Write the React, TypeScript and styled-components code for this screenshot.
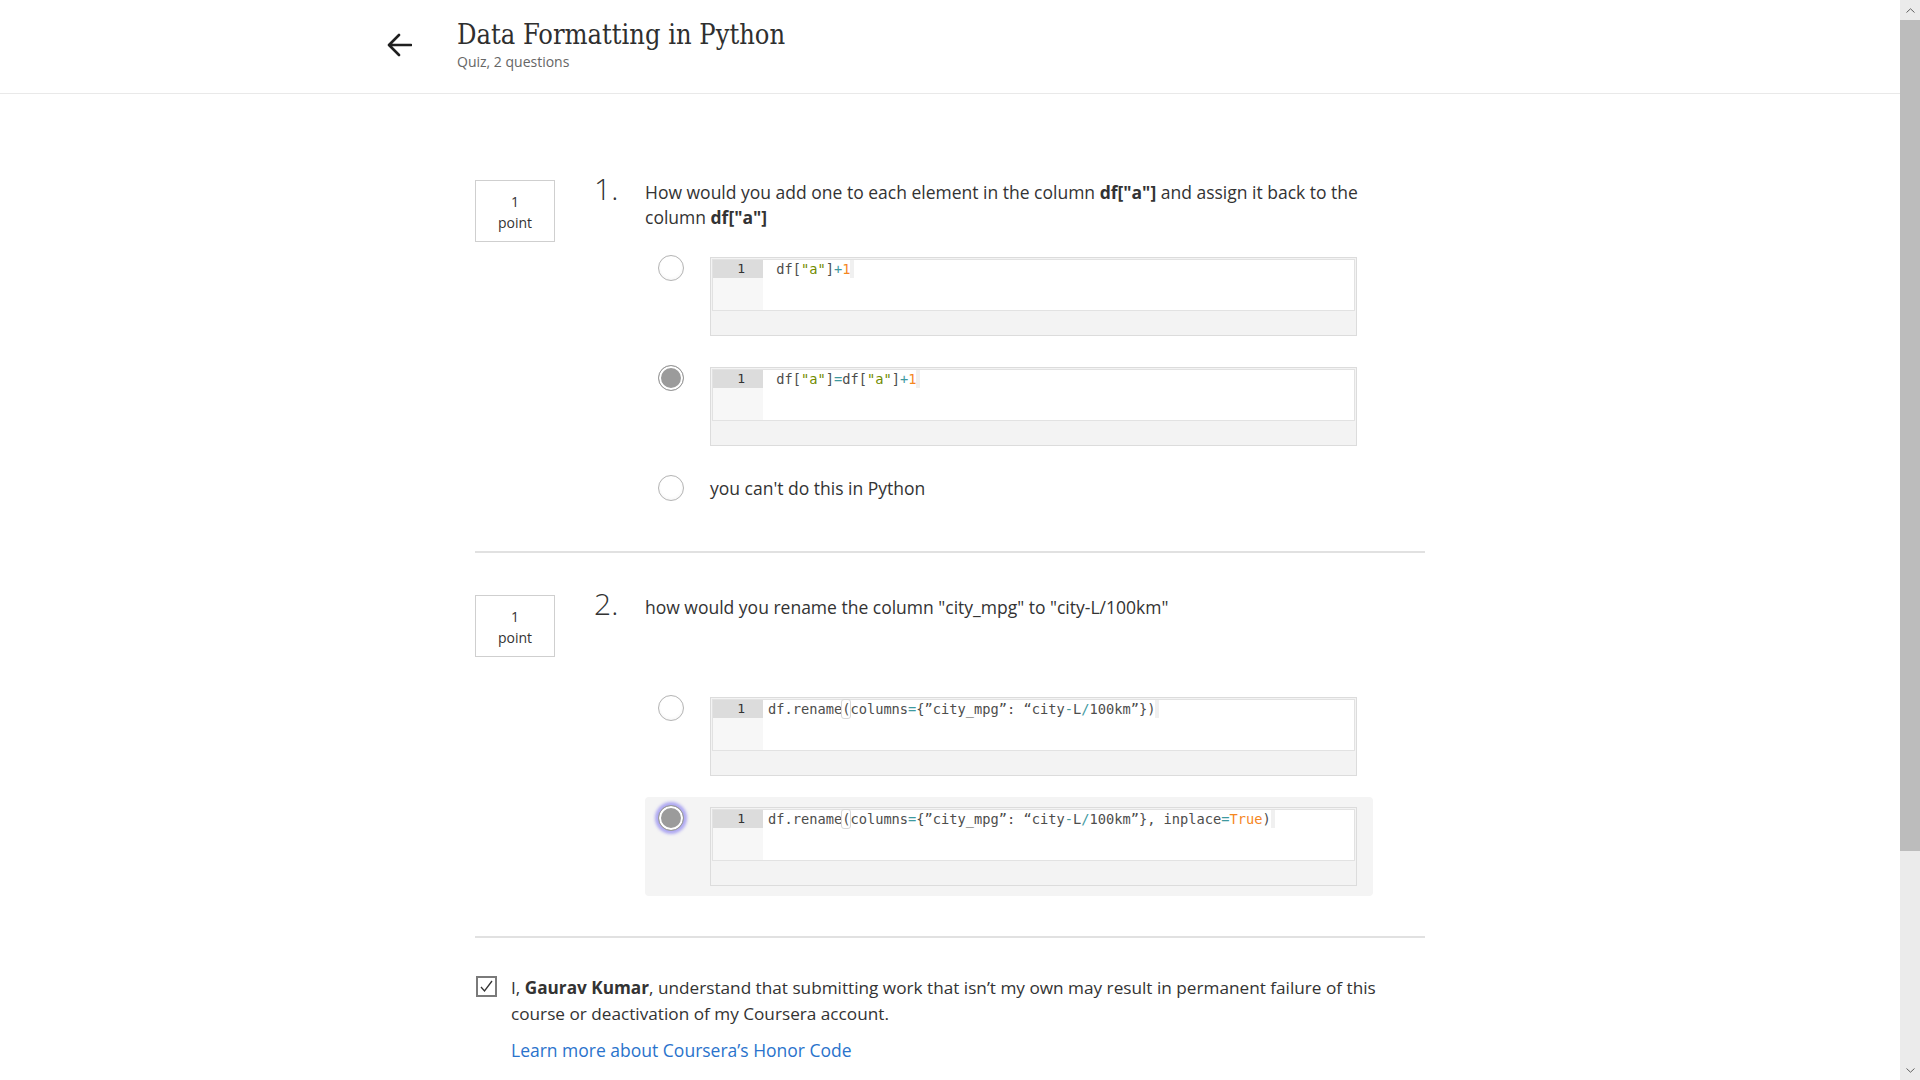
import React from 'react';
import styled, { createGlobalStyle } from 'styled-components';

type TokenKind = 'plain' | 'str' | 'op' | 'num' | 'match';
type Token = [string, TokenKind];

interface Option {
  code?: Token[];
  text?: string;
  checked?: boolean;
  focused?: boolean;
}

interface Question {
  number: number;
  prompt: React.ReactNode;
  spacing: number;
  options: Option[];
}

const questions: Question[] = [
  {
    number: 1,
    spacing: 17,
    prompt: (
      <>
        How would you add one to each element in the column <b>df["a"]</b> and assign it back to the column <b>df["a"]</b>
      </>
    ),
    options: [
      { code: [[' df[', 'plain'], ['"a"', 'str'], [']', 'plain'], ['+', 'op'], ['1', 'num']] },
      {
        checked: true,
        code: [
          [' df[', 'plain'], ['"a"', 'str'], [']', 'plain'], ['=', 'op'], ['df[', 'plain'],
          ['"a"', 'str'], [']', 'plain'], ['+', 'op'], ['1', 'num'],
        ],
      },
      { text: "you can't do this in Python" },
    ],
  },
  {
    number: 2,
    spacing: 67,
    prompt: <>how would you rename the column "city_mpg" to "city-L/100km"</>,
    options: [
      {
        code: [
          ['df.rename', 'plain'], ['(', 'match'], ['columns', 'plain'], ['=', 'op'],
          ['{”city_mpg”: “city', 'plain'], ['-', 'op'], ['L', 'plain'], ['/', 'op'], ['100km”})', 'plain'],
        ],
      },
      {
        checked: true,
        focused: true,
        code: [
          ['df.rename', 'plain'], ['(', 'match'], ['columns', 'plain'], ['=', 'op'],
          ['{”city_mpg”: “city', 'plain'], ['-', 'op'], ['L', 'plain'], ['/', 'op'],
          ['100km”}, inplace', 'plain'], ['=', 'op'], ['True', 'num'], [')', 'plain'],
        ],
      },
    ],
  },
];

const tokenColors: Record<TokenKind, string> = {
  plain: '#4d4d4c',
  str: '#718c00',
  op: '#3e999f',
  num: '#f5871f',
  match: '#4d4d4c',
};

const App = () => {
  return (
    <Page>
      <GlobalStyle />
      <Main>
        <Header>
          <HeaderInner>
            <BackButton aria-label="Back">
              <svg width="25" height="24" viewBox="0 0 25 24" fill="none">
                <path d="M24 12H2.5M12 2L2 12l10 10" stroke="#1f1f1f" strokeWidth="2.6" strokeLinecap="round" strokeLinejoin="round" />
              </svg>
            </BackButton>
            <div>
              <Title>Data Formatting in Python</Title>
              <Subtitle>Quiz, 2 questions</Subtitle>
            </div>
          </HeaderInner>
        </Header>

        <Container>
          {questions.map((q) => (
            <QuestionBlock key={q.number}>
              <PointBox>
                <span>1</span>
                <span>point</span>
              </PointBox>
              <Number>{q.number}.</Number>
              <Content>
                <Prompt $spacing={q.spacing}>{q.prompt}</Prompt>
                <Options>
                  {q.options.map((opt, i) => (
                    <OptionRow key={i} $highlighted={!!opt.focused} $centered={!!opt.text}>
                      <Radio $checked={!!opt.checked} $focused={!!opt.focused} />
                      {opt.text ? (
                        <OptionText>{opt.text}</OptionText>
                      ) : (
                        <CodeBox>
                          <Editor>
                            <Gutter>
                              <LineNumber>1</LineNumber>
                            </Gutter>
                            <CodeLine>
                              {opt.code!.map(([t, k], j) => (
                                <Token key={j} $kind={k}>{t}</Token>
                              ))}
                              <LineEnd />
                            </CodeLine>
                          </Editor>
                          <EditorFooter />
                        </CodeBox>
                      )}
                    </OptionRow>
                  ))}
                </Options>
              </Content>
            </QuestionBlock>
          ))}

          <HonorRow>
            <Checkbox>
              <svg width="15" height="15" viewBox="0 0 15 15" fill="none">
                <path d="M2 8l3.5 4L13 2" stroke="#333" strokeWidth="1.3" />
              </svg>
            </Checkbox>
            <HonorText>
              I, <b>Gaurav Kumar</b>, understand that submitting work that isn’t my own may result in permanent failure of this course or deactivation of my Coursera account.
              <HonorLink href="#">Learn more about Coursera’s Honor Code</HonorLink>
            </HonorText>
          </HonorRow>
        </Container>
      </Main>

      <Scrollbar>
        <ScrollArrow>
          <svg width="9" height="5" viewBox="0 0 9 5"><path d="M0.5 4.5L4.5 0.8 8.5 4.5" stroke="#606060" fill="none" /></svg>
        </ScrollArrow>
        <Thumb />
        <Track />
        <ScrollArrow>
          <svg width="9" height="5" viewBox="0 0 9 5"><path d="M0.5 0.5L4.5 4.2 8.5 0.5" stroke="#606060" fill="none" /></svg>
        </ScrollArrow>
      </Scrollbar>
    </Page>
  );
};

const GlobalStyle = createGlobalStyle`
  html, body {
    margin: 0;
    padding: 0;
    height: 100%;
    overflow: hidden;
  }
  body {
    font-family: "Open Sans", "Liberation Sans", sans-serif;
    color: #333;
    background: #fff;
  }
  * {
    box-sizing: border-box;
  }
`;

const Page = styled.div`
  display: flex;
  height: 100vh;
  overflow: hidden;
`;

const Main = styled.div`
  flex: 1;
  min-width: 0;
  overflow: hidden;
`;

const Header = styled.header`
  height: 94px;
  border-bottom: 1px solid #e9e9e9;
`;

const HeaderInner = styled.div`
  width: 1146px;
  margin: 0 auto;
  padding-left: 10px;
  display: flex;
  align-items: flex-start;
`;

const BackButton = styled.div`
  width: 25px;
  height: 24px;
  margin-top: 33px;
  margin-right: 45px;
  display: flex;
`;

const Title = styled.h1`
  margin: 18px 0 0;
  font-family: "DejaVu Serif Condensed", "DejaVu Serif", serif;
  font-weight: 400;
  font-size: 27px;
  line-height: 34px;
  color: #2f2f2f;
`;

const Subtitle = styled.div`
  margin-top: 0;
  font-size: 14px;
  line-height: 20px;
  color: #666;
`;

const Container = styled.main`
  width: 950px;
  margin: 0 auto;
  padding-top: 44px;
`;

const QuestionBlock = styled.section`
  display: flex;
  align-items: flex-start;
  padding: 42px 0 40px;
  border-bottom: 2px solid #e1e1e1;
`;

const PointBox = styled.div`
  width: 80px;
  height: 62px;
  flex-shrink: 0;
  border: 1px solid #cfcfcf;
  display: flex;
  flex-direction: column;
  align-items: center;
  justify-content: center;
  padding-top: 2px;
  font-size: 14px;
  line-height: 21px;
  color: #333;
`;

const Number = styled.div`
  width: 51px;
  margin-left: 39px;
  margin-top: -6px;
  flex-shrink: 0;
  font-size: 30px;
  font-weight: 300;
  line-height: 30px;
  color: #333;
`;

const Content = styled.div`
  flex: 1;
`;

const Prompt = styled.div<{ $spacing: number }>`
  max-width: 755px;
  margin-bottom: ${(p) => p.$spacing}px;
  font-size: 17.5px;
  line-height: 25px;
  color: #333;
`;

const Options = styled.div`
  display: flex;
  flex-direction: column;
  gap: 11px;
`;

const OptionRow = styled.div<{ $highlighted: boolean; $centered: boolean }>`
  width: 728px;
  display: flex;
  align-items: ${(p) => (p.$centered ? 'center' : 'flex-start')};
  padding: 8px 16px 10px 13px;
  border-radius: 4px;
  background: ${(p) => (p.$highlighted ? '#f4f4f4' : 'transparent')};
`;

const Radio = styled.span<{ $checked: boolean; $focused: boolean }>`
  width: 26px;
  height: 26px;
  flex-shrink: 0;
  margin-right: 26px;
  border-radius: 50%;
  border: 1px solid ${(p) => (p.$checked ? '#9a9a9a' : '#b4b4b4')};
  background: ${(p) => (p.$checked ? '#9b9b9b' : 'radial-gradient(circle at 50% 45%, #fff 55%, #ececec 100%)')};
  box-shadow: ${(p) =>
    p.$checked
      ? `inset 0 0 0 2px #fff${p.$focused ? ', 0 0 3px 3px rgba(118, 108, 240, 0.55)' : ''}`
      : 'none'};
`;

const OptionText = styled.span`
  font-size: 17.5px;
  line-height: 25px;
  color: #333;
`;

const CodeBox = styled.div`
  flex: 1;
  margin-top: 2px;
  padding: 1px 1px 0;
  border: 1px solid #dcdcdc;
  background: #f3f3f3;
`;

const Editor = styled.div`
  height: 52px;
  display: flex;
  border: 1px solid #e2e2e2;
  background: #fff;
`;

const Gutter = styled.div`
  width: 50px;
  flex-shrink: 0;
  background: #f7f7f7;
`;

const LineNumber = styled.div`
  height: 18px;
  padding-right: 18px;
  background: #dcdcdc;
  text-align: right;
  font-family: "DejaVu Sans Mono", "Liberation Mono", monospace;
  font-size: 13px;
  line-height: 18px;
  color: #333;
`;

const CodeLine = styled.div`
  height: 18px;
  padding-left: 5px;
  display: flex;
  align-items: center;
  white-space: pre;
  font-family: "DejaVu Sans Mono", "Liberation Mono", monospace;
  font-size: 13.7px;
  line-height: 18px;
`;

const Token = styled.span<{ $kind: TokenKind }>`
  color: ${(p) => tokenColors[p.$kind]};
  ${(p) => p.$kind === 'match' && 'outline: 1px solid #d8d8d8; border-radius: 2px;'}
`;

const LineEnd = styled.span`
  width: 4px;
  height: 18px;
  background: #f0f0f0;
`;

const EditorFooter = styled.div`
  height: 24px;
`;

const HonorRow = styled.div`
  display: flex;
  align-items: flex-start;
  padding-top: 37px;
`;

const Checkbox = styled.span`
  width: 21px;
  height: 21px;
  flex-shrink: 0;
  margin: 1px 14px 0 1px;
  border: 2px solid #7a7a7a;
  background: #fff;
  display: flex;
  align-items: center;
  justify-content: center;
`;

const HonorText = styled.div`
  max-width: 890px;
  font-size: 17.2px;
  line-height: 26px;
  color: #333;
`;

const HonorLink = styled.a`
  display: block;
  margin-top: 10px;
  font-size: 17.5px;
  color: #2a73cc;
  text-decoration: none;
`;

const Scrollbar = styled.div`
  width: 20px;
  flex-shrink: 0;
  display: flex;
  flex-direction: column;
  background: #ebebeb;
`;

const ScrollArrow = styled.div`
  height: 20px;
  display: flex;
  align-items: center;
  justify-content: center;
`;

const Thumb = styled.div`
  height: 831px;
  background: #bcbcbc;
`;

const Track = styled.div`
  flex: 1;
`;

export default App;
